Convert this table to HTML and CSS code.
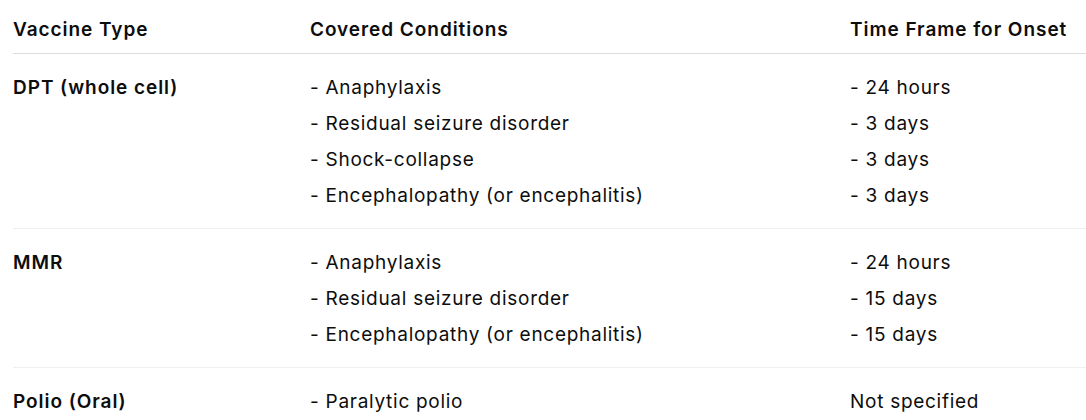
FILE: index.html
```html
<!DOCTYPE html>
<html lang="en">
<head>
<meta charset="utf-8">
<title>Vaccine Injury Table</title>
<link rel="stylesheet" href="styles.css">
</head>
<body>
<div class="wrap">
<table class="vt">
  <colgroup>
    <col class="c1">
    <col class="c2">
    <col class="c3">
  </colgroup>
  <thead>
    <tr>
      <th>Vaccine Type</th>
      <th>Covered Conditions</th>
      <th>Time Frame for Onset</th>
    </tr>
  </thead>
  <tbody>
    <tr>
      <td class="type"><div class="ln">DPT (whole cell)</div></td>
      <td>
        <div class="ln">- Anaphylaxis</div>
        <div class="ln">- Residual seizure disorder</div>
        <div class="ln">- Shock-collapse</div>
        <div class="ln">- Encephalopathy (or encephalitis)</div>
      </td>
      <td>
        <div class="ln">- 24 hours</div>
        <div class="ln">- 3 days</div>
        <div class="ln">- 3 days</div>
        <div class="ln">- 3 days</div>
      </td>
    </tr>
    <tr>
      <td class="type"><div class="ln">MMR</div></td>
      <td>
        <div class="ln">- Anaphylaxis</div>
        <div class="ln">- Residual seizure disorder</div>
        <div class="ln">- Encephalopathy (or encephalitis)</div>
      </td>
      <td>
        <div class="ln">- 24 hours</div>
        <div class="ln">- 15 days</div>
        <div class="ln">- 15 days</div>
      </td>
    </tr>
    <tr>
      <td class="type"><div class="ln">Polio (Oral)</div></td>
      <td>
        <div class="ln">- Paralytic polio</div>
      </td>
      <td>
        <div class="ln">Not specified</div>
      </td>
    </tr>
  </tbody>
</table>
</div>
</body>
</html>
```

FILE: styles.css
```css
html, body {
  margin: 0;
  padding: 0;
  background: #ffffff;
}

body {
  font-family: Inter, "Noto Sans", "DejaVu Sans", sans-serif;
  font-size: 19px;
  letter-spacing: 0.72px;
  color: #0d0d0d;
}

.wrap {
  padding-left: 13px;
}

.vt {
  width: 100%;
  border-collapse: collapse;
  table-layout: fixed;
}

.c1 { width: 297px; }
.c2 { width: 540px; }

.vt th {
  text-align: left;
  font-weight: 600;
  letter-spacing: 0.95px;
  line-height: 24px;
  padding: 18px 0 11px 0;
  border-bottom: 1px solid #dcdcdc;
  white-space: nowrap;
}

.vt td {
  vertical-align: top;
  padding: 16px 0 14px 0;
  border-bottom: 1px solid #efefef;
}

.vt tbody tr:last-child td {
  border-bottom: none;
}

.vt td.type {
  font-weight: 600;
  letter-spacing: 0.95px;
}

.ln {
  line-height: 36px;
  white-space: nowrap;
}
```
